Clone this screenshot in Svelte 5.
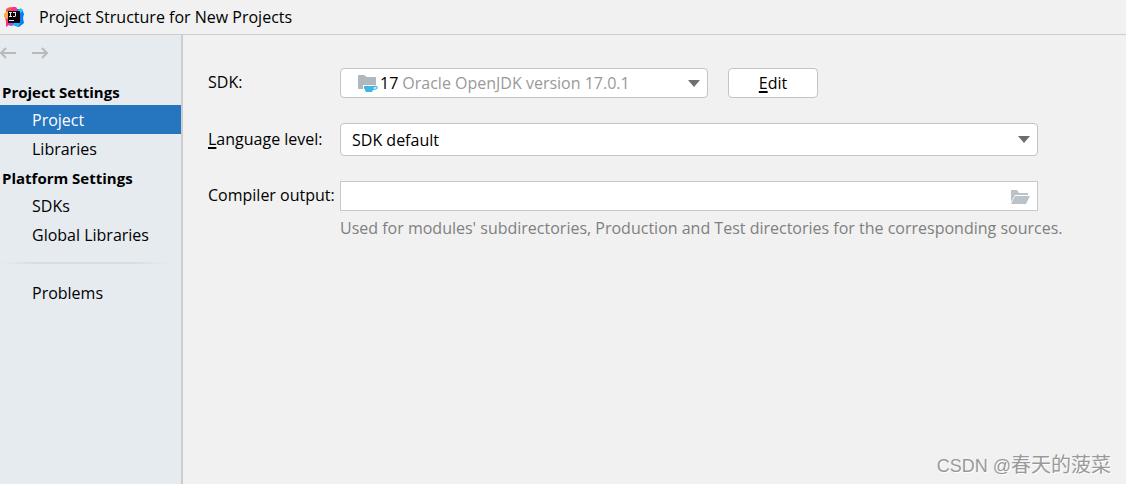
<script>
	const groups = [
		{ title: 'Project Settings', items: ['Project', 'Libraries'] },
		{ title: 'Platform Settings', items: ['SDKs', 'Global Libraries'] }
	];

	let selected = $state('Project');
	let sdk = $state('17');
	let level = $state('default');
	let output = $state('');
</script>

<svelte:head>
	<title>Project Structure for New Projects</title>
</svelte:head>

<div class="window">
	<header class="titlebar">
		<svg class="logo" width="20" height="20" viewBox="0 0 20 20" aria-hidden="true">
			<path d="M2 2 6 0l4 1 1 7-5 3-5-1 1-4z" fill="#fb5a38" />
			<path d="M8 0h4l2 3-5 6-3-4z" fill="#fc318c" />
			<path d="M1 9l5-1 6 9-5 2-2-1-3 2 0-5z" fill="#ff2f7d" />
			<path d="M0 7 3 4l4 6-4 2-3-2z" fill="#ffa63d" />
			<path d="M13 2 18 2l2 5-1 4 1 5-5 4-6-2 4-7z" fill="#087cfa" />
			<path d="M14 3 17 1l2 3-4 3z" fill="#27c8f5" />
			<path d="M9 16l8-1-3 5-5-2z" fill="#18b8f4" />
			<path d="M5 16h5l-2 3-3-1z" fill="#9a55e8" />
			<rect x="4" y="4" width="12" height="12" fill="#080405" />
			<path
				d="M5 5h3v1H7v3h1v1H5V9h1V6H5zM9 5h3v4l-1 1H9V9h2V6H9zM5 13h5v1H5z"
				fill="#fff"
				fill-opacity="0.9"
			/>
		</svg>
		<h1>Project Structure for New Projects</h1>
	</header>

	<div class="body">
		<aside class="sidebar">
			<div class="history">
				<button aria-label="Back">
					<svg width="16" height="12" viewBox="0 0 16 12">
						<path d="M16 6H1M6 1 1 6l5 5" />
					</svg>
				</button>
				<button aria-label="Forward">
					<svg width="16" height="12" viewBox="0 0 16 12">
						<path d="M0 6h15M10 1l5 5-5 5" />
					</svg>
				</button>
			</div>

			<nav>
				{#each groups as group}
					<h2>{group.title}</h2>
					{#each group.items as item}
						<button class="item" class:active={selected === item} onclick={() => (selected = item)}>
							{item}
						</button>
					{/each}
				{/each}
				<hr />
				<button
					class="item"
					class:active={selected === 'Problems'}
					onclick={() => (selected = 'Problems')}
				>
					Problems
				</button>
			</nav>
		</aside>

		<main class="form">
			<label for="sdk">SDK:</label>
			<div class="sdk-row">
				<div class="combo sdk">
					<select id="sdk" bind:value={sdk}>
						<option value="17">17 Oracle OpenJDK version 17.0.1</option>
					</select>
					<span class="sdk-value" aria-hidden="true">
						<svg width="20" height="18" viewBox="0 0 20 18">
							<path d="M0 1h6l3 2h9v8H5v4H0z" fill="#afb8be" />
							<path d="M6 12h10v2l-2 4H8l-2-4z" fill="#40b6e0" />
							<path
								d="M15 12.500h2.500q2 0 1.500 1.500-1 1.500-4 1.500"
								fill="none"
								stroke="#40b6e0"
								stroke-width="1.300"
							/>
						</svg>
						17 <em>Oracle OpenJDK version 17.0.1</em>
					</span>
					<svg class="arrow" width="12" height="7" viewBox="0 0 12 7" aria-hidden="true">
						<path d="M0 0h12L6 7z" />
					</svg>
				</div>
				<button class="edit"><u>E</u>dit</button>
			</div>

			<label for="level"><u>L</u>anguage level:</label>
			<div class="combo level">
				<select id="level" bind:value={level}>
					<option value="default">SDK default</option>
				</select>
				<svg class="arrow" width="12" height="7" viewBox="0 0 12 7" aria-hidden="true">
					<path d="M0 0h12L6 7z" />
				</svg>
			</div>

			<label for="output">Compiler output:</label>
			<div class="path">
				<input id="output" type="text" bind:value={output} />
				<button aria-label="Browse">
					<svg width="19" height="14" viewBox="0 0 19 14">
						<path d="M0 0h6l2 3h9v2H4L0 12z" />
						<path d="M4 6h15l-4 8H0z" />
					</svg>
				</button>
			</div>

			<p class="hint">
				Used for modules' subdirectories, Production and Test directories for the corresponding sources.
			</p>
		</main>
	</div>

	<div class="watermark">CSDN @<span>春天的菠菜</span></div>
</div>

<style>
	:global(body) {
		margin: 0;
	}
	.window {
		position: relative;
		display: flex;
		flex-direction: column;
		min-height: 100vh;
		background: #f1f1f1;
		color: #000;
		font: 16px/20px 'Open Sans', 'Noto Sans', sans-serif;
	}
	button,
	select,
	input {
		box-sizing: border-box;
		margin: 0;
		font: inherit;
		color: inherit;
	}
	button {
		padding: 0;
		border: 0;
		background: none;
	}
	.titlebar {
		display: flex;
		align-items: center;
		gap: 15px;
		height: 34px;
		padding-left: 4px;
		border-bottom: 1px solid #cdcdcd;
	}
	h1 {
		margin: 0;
		font-size: 16px;
		font-weight: 400;
	}
	.body {
		flex: 1;
		display: flex;
	}

	/* Sidebar */
	.sidebar {
		box-sizing: border-box;
		flex: none;
		width: 183px;
		border-right: 2px solid #cdcdcd;
		background: #e6ebf0;
	}
	.history {
		display: flex;
		gap: 16px;
		padding: 12px 0 20px;
	}
	.history svg {
		display: block;
		fill: none;
		stroke: #bababa;
		stroke-width: 2;
	}
	h2 {
		margin: 0;
		padding: 3px 2px 1px;
		font-size: 15px;
		line-height: 24px;
	}
	nav h2:first-child {
		padding: 1px 2px;
	}
	.item {
		display: block;
		width: 100%;
		height: 29px;
		padding: 0 0 0 32px;
		text-align: left;
	}
	.item.active {
		background: #2675bf;
		color: #fff;
	}
	hr {
		height: 2px;
		margin: 13px 12px 14px 0;
		border: 0;
		background: linear-gradient(to right, transparent, #d9dde1 20%, #d9dde1 80%, transparent);
	}

	/* Project page */
	.form {
		flex: 1;
		display: grid;
		grid-template-columns: 125px 1fr;
		column-gap: 7px;
		align-content: start;
		align-items: center;
		padding: 33px 88px 0 25px;
	}
	label {
		padding-bottom: 2px;
		white-space: nowrap;
	}
	.sdk-row {
		display: flex;
		gap: 20px;
	}
	.combo {
		position: relative;
	}
	.combo select {
		display: block;
		width: 100%;
		height: 30px;
		padding: 0 30px 0 11px;
		border: 1px solid #c4c4c4;
		border-radius: 4px;
		background: #fff;
		appearance: none;
	}
	.sdk {
		flex: 0 1 368px;
	}
	.sdk select {
		color: transparent;
	}
	.sdk option {
		color: #000;
	}
	.sdk-value {
		position: absolute;
		inset: 0 30px 0 18px;
		display: flex;
		align-items: center;
		gap: 4px;
		white-space: nowrap;
		pointer-events: none;
	}
	.sdk-value svg {
		margin-right: -2px;
	}
	.sdk-value em {
		font-style: normal;
		color: #999;
	}
	.arrow {
		position: absolute;
		top: 0;
		right: 8px;
		bottom: 0;
		margin: auto 0;
		fill: #6e6e6e;
		pointer-events: none;
	}
	.edit {
		width: 90px;
		height: 30px;
		border: 1px solid #c4c4c4;
		border-radius: 4px;
		background: #fff;
	}
	u {
		text-underline-offset: 2px;
		text-decoration-thickness: 2px;
	}
	.level {
		margin: 25px 0;
	}
	.level select {
		height: 33px;
	}
	.path {
		display: flex;
		height: 28px;
		border: 1px solid #c9c9c9;
		background: #fff;
	}
	.path input {
		flex: 1;
		min-width: 0;
		padding: 0 8px;
		border: 0;
		background: none;
	}
	.path button {
		padding: 2px 7px 0;
	}
	.path svg {
		display: block;
		fill: #bcc3c8;
	}
	.hint {
		grid-column: 2;
		margin: 7px -60px 0 0;
		color: #808080;
	}
	.watermark {
		position: absolute;
		right: 15px;
		bottom: 5px;
		color: #999;
		font: 18px/26px 'Liberation Sans', 'Noto Sans CJK SC', sans-serif;
		text-shadow: 1px 1px 0 #fff;
	}
	.watermark span {
		font-size: 20px;
	}
</style>
